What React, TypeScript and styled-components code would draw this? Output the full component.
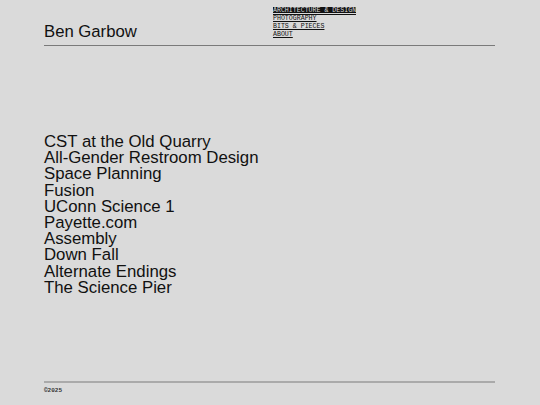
import React from "react";
import styled, { createGlobalStyle } from "styled-components";

const Global = createGlobalStyle`
  html, body { margin: 0; padding: 0; background: #dadada; }
  body { font-family: "Liberation Sans", Arial, sans-serif; color: #111; }
  * { box-sizing: border-box; }
`;

const Page = styled.div`
  min-height: 100vh;
  display: flex;
  flex-direction: column;
  padding: 0 45px 0 44px;
`;

const Header = styled.header`
  display: grid;
  grid-template-columns: 229px 1fr;
  align-items: end;
  padding-top: 7px;
  padding-bottom: 5px;
  border-bottom: 1px solid #7a7a7a;
`;

const Title = styled.h1`
  margin: 0;
  font-size: 16.7px;
  line-height: 16.2px;
  font-weight: 400;
`;

const Nav = styled.nav`
  display: flex;
  flex-direction: column;
  align-items: flex-start;
  margin-bottom: 1px;
`;

const NavLink = styled.a<{ $active?: boolean }>`
  font-family: "Liberation Mono", "Courier New", monospace;
  font-size: 6.6px;
  line-height: 8px;
  font-weight: 400;
  text-transform: uppercase;
  text-decoration: underline;
  color: ${(p) => (p.$active ? "#dadada" : "#111")};
  background: ${(p) => (p.$active ? "#111" : "transparent")};
  cursor: pointer;
`;

const Main = styled.main`
  flex: 1;
  display: flex;
  align-items: center;
  padding-top: 3px;
`;

const ProjectList = styled.ul`
  list-style: none;
  margin: 0;
  padding: 0;
`;

const Project = styled.li`
  font-size: 16.8px;
  line-height: 16.2px;
`;

const Footer = styled.footer`
  border-top: 2px solid #aaaaaa;
  padding: 4px 0 11px;
`;

const Copy = styled.small`
  display: block;
  font-family: "Liberation Mono", "Courier New", monospace;
  font-size: 6px;
  line-height: 7px;
  font-weight: 700;
  color: #333;
`;

const navItems = ["Architecture & Design", "Photography", "Bits & Pieces", "About"];

const projects = [
  "CST at the Old Quarry",
  "All-Gender Restroom Design",
  "Space Planning",
  "Fusion",
  "UConn Science 1",
  "Payette.com",
  "Assembly",
  "Down Fall",
  "Alternate Endings",
  "The Science Pier",
];

export default function App() {
  return (
    <>
      <Global />
      <Page>
        <Header>
          <Title>Ben Garbow</Title>
          <Nav>
            {navItems.map((n, i) => (
              <NavLink key={n} $active={i === 0}>
                {n}
              </NavLink>
            ))}
          </Nav>
        </Header>
        <Main>
          <ProjectList>
            {projects.map((p) => (
              <Project key={p}>{p}</Project>
            ))}
          </ProjectList>
        </Main>
        <Footer>
          <Copy>©2025</Copy>
        </Footer>
      </Page>
    </>
  );
}
